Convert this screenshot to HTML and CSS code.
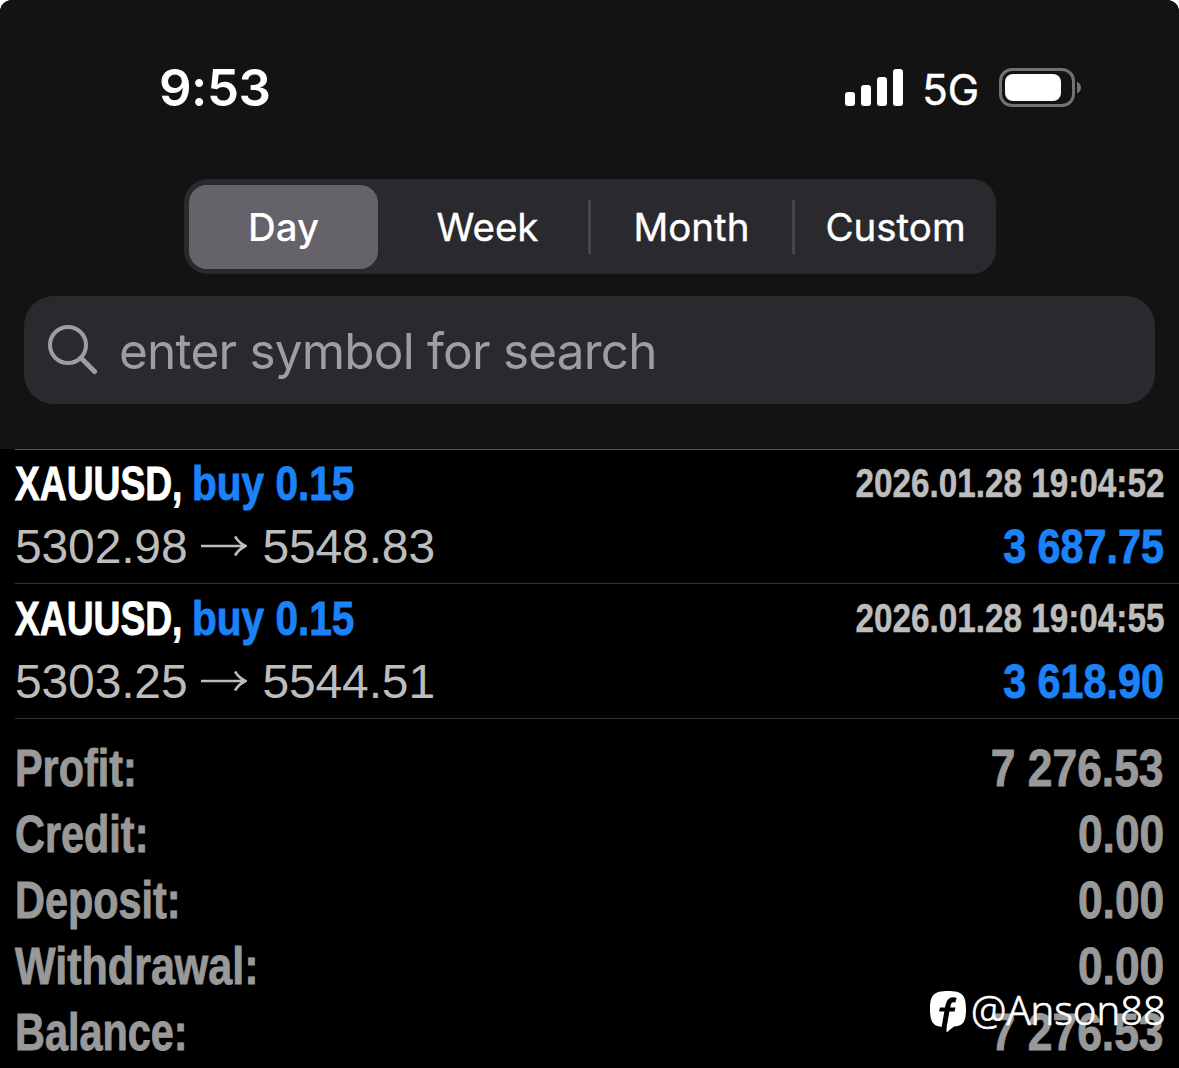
FILE: index.html
```html
<!DOCTYPE html>
<html lang="en">
<head>
<meta charset="utf-8">
<title>History</title>
<link rel="stylesheet" href="styles.css">
</head>
<body>
<div class="screen">
  <header class="top">
    <div class="status">
      <span class="time">9:53</span>
      <div class="indicators">
        <svg class="signal" width="58" height="37" viewBox="0 0 58 37" fill="#fff"><rect x="0" y="23" width="10" height="14" rx="3"/><rect x="16" y="16" width="10" height="21" rx="3"/><rect x="32" y="8" width="10" height="29" rx="3"/><rect x="48" y="0" width="10" height="37" rx="3"/></svg>
        <span class="network">5G</span>
        <svg class="battery" width="83" height="40" viewBox="0 0 83 40"><rect x="1.500" y="1.500" width="73" height="36" rx="11.500" fill="none" stroke="#727272" stroke-width="3"/><rect x="6" y="6" width="56" height="27" rx="8" fill="#fff"/><path d="M78 13.500Q82 15.500 82 19.500T78 25.500Z" fill="#727272"/></svg>
      </div>
    </div>
    <nav class="segments">
      <span class="segment active">Day</span>
      <span class="segment">Week</span>
      <span class="segment divided">Month</span>
      <span class="segment divided">Custom</span>
    </nav>
    <div class="search">
      <svg width="50" height="50" viewBox="0 0 50 50" fill="none" stroke="#9e9ca4" stroke-width="4"><circle cx="20" cy="20" r="18"/><path d="M33 33L46.500 46.500" stroke-width="5" stroke-linecap="round"/></svg>
      <span class="placeholder">enter symbol for search</span>
    </div>
  </header>
  <main>
    <section class="deal">
      <div class="line"><span class="name"><b class="symbol">XAUUSD,</b><b class="side">buy 0.15</b></span><span class="date">2026.01.28 19:04:52</span></div>
      <div class="line prices"><span class="price">5302.98<svg class="arrow" width="46" height="22" viewBox="0 0 46 22" fill="none" stroke="#bdbdbd" stroke-width="2.500"><path d="M0 11H44M34 1.500Q38 8 44.500 11Q38 14 34 20.500"/></svg>5548.83</span><span class="gain">3 687.75</span></div>
    </section>
    <section class="deal">
      <div class="line"><span class="name"><b class="symbol">XAUUSD,</b><b class="side">buy 0.15</b></span><span class="date">2026.01.28 19:04:55</span></div>
      <div class="line prices"><span class="price">5303.25<svg class="arrow" width="46" height="22" viewBox="0 0 46 22" fill="none" stroke="#bdbdbd" stroke-width="2.500"><path d="M0 11H44M34 1.500Q38 8 44.500 11Q38 14 34 20.500"/></svg>5544.51</span><span class="gain">3 618.90</span></div>
    </section>
    <section class="totals">
      <div class="total"><span class="label">Profit:</span><span class="value">7 276.53</span></div>
      <div class="total"><span class="label">Credit:</span><span class="value">0.00</span></div>
      <div class="total"><span class="label">Deposit:</span><span class="value">0.00</span></div>
      <div class="total"><span class="label wide">Withdrawal:</span><span class="value">0.00</span></div>
      <div class="total"><span class="label">Balance:</span><span class="value">7 276.53</span></div>
    </section>
  </main>
  <div class="watermark">
    <svg width="37" height="42" viewBox="0 0 37 42"><path d="M18 0C32 0 36 4 36 18C36 31 33 35 24 35.500L16.500 41.500V36H12C3 35 0 31 0 18C0 4 4 0 18 0Z" fill="#fff"/><path d="M26 9.200C20 7.500 18.500 11 17.500 17L15 31Q14.500 35 13.500 38" fill="none" stroke="#000" stroke-width="5"/><path d="M10 16.500H25.500L24.500 20.500H9Z" fill="#000"/></svg>
    <span class="handle">@Anson88</span>
  </div>
</div>
</body>
</html>
```
FILE: styles.css
```css
body { margin: 0; background: #fff; }
.screen { position: relative; width: 1179px; height: 1068px; overflow: hidden; background: #000; border-radius: 12px 12px 0 0; font-family: Inter, sans-serif; color: #fff; }
.top { box-sizing: border-box; height: 449px; padding-top: 52px; background: #131313; }
.status { display: flex; justify-content: space-between; align-items: center; height: 72px; padding: 0 97px 0 159px; }
.time { font-size: 51px; font-weight: 600; line-height: 72px; letter-spacing: -0.5px; }
.indicators { display: flex; align-items: center; }
.signal { margin-bottom: 2px; }
.network { margin: 4px 20px 0 19px; font-size: 42px; font-weight: 400; line-height: 60px; -webkit-text-stroke: 0.5px; }
.segments { display: grid; grid-template-columns: 189px 1fr 1fr 1fr; column-gap: 15px; box-sizing: border-box; width: 812px; height: 95px; margin: 55px 0 0 184px; padding: 6px 6px 6px 5px; background: #2a292e; border-radius: 24px; }
.segment { display: flex; align-items: center; justify-content: center; position: relative; height: 84px; font-size: 38.5px; font-weight: 400; -webkit-text-stroke: 0.4px; }
.active { background: #656369; border-radius: 18px; font-weight: 500; -webkit-text-stroke: 0; }
.divided::before { content: ""; position: absolute; left: -9px; top: 15px; width: 3px; height: 54px; background: #47464b; }
.search { display: flex; align-items: center; box-sizing: border-box; width: 1131px; height: 108px; margin: 22px 24px 0; padding: 0 24px; gap: 21px; background: #2a292e; border-radius: 30px; }
.placeholder { font-size: 49.5px; letter-spacing: -0.8px; color: #9e9ca4; margin-top: 2px; white-space: nowrap; }
.deal { box-sizing: border-box; height: 135px; margin-left: 15px; padding: 1px 15px 0 0; border-top: 1px solid #343434; }
.deal:first-child { height: 134px; padding-top: 0; border-color: #555; }
.line { display: flex; justify-content: space-between; align-items: center; height: 66px; font: bold 48px "Liberation Sans", sans-serif; white-space: nowrap; }
.prices { height: 60px; }
.name { display: flex; }
/* Condensed bold faces, narrowed from the regular width */
.symbol { width: 177px; transform: scaleX(0.775); transform-origin: left; }
.side { transform: scaleX(0.845); transform-origin: left; }
.symbol, .side, .gain, .label, .value { -webkit-text-stroke: 0.9px; }
.date { font-size: 40px; color: #bdbdbd; transform: scaleX(0.832); transform-origin: right; -webkit-text-stroke: 0.5px; }
.side, .gain { color: #1c82f8; }
.gain { transform: scaleX(0.86); transform-origin: right; }
.price { font: 48px "Liberation Sans", sans-serif; letter-spacing: -0.15px; color: #bdbdbd; }
.arrow { margin: 0 15px 0 14px; vertical-align: 6px; }
.totals { margin-left: 15px; padding: 17px 15px 0 0; border-top: 1px solid #343434; }
.total { display: flex; justify-content: space-between; height: 66px; font: bold 51px/66px "Liberation Sans", sans-serif; color: #999; }
.label { transform: scaleX(0.812); transform-origin: left; }
.wide { transform: scaleX(0.844); }
.value { transform: scaleX(0.87); transform-origin: right; }
.watermark { position: absolute; left: 930px; top: 991px; display: flex; gap: 4px; }
.handle { font: 300 39.8px/37px "Noto Sans", sans-serif; -webkit-text-stroke: 0.6px; }
```
